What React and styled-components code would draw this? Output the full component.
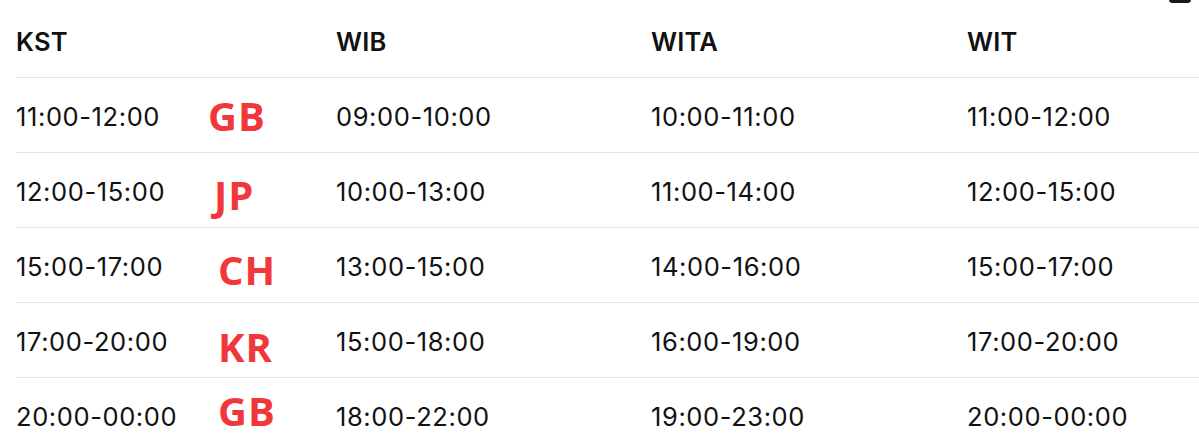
import React from 'react';
import styled, { createGlobalStyle } from 'styled-components';

const GlobalStyle = createGlobalStyle`
  html, body {
    margin: 0;
    padding: 0;
    background: #ffffff;
  }
  body {
    font-family: Inter, "Liberation Sans", sans-serif;
    color: #111111;
    overflow: hidden;
  }
`

const rows = [
  { kst: '11:00-12:00', tag: 'GB', shift: 0, lift: 0, wib: '09:00-10:00', wita: '10:00-11:00', wit: '11:00-12:00' },
  { kst: '12:00-15:00', tag: 'JP', shift: 6, lift: -4, wib: '10:00-13:00', wita: '11:00-14:00', wit: '12:00-15:00' },
  { kst: '15:00-17:00', tag: 'CH', shift: 10, lift: -4, wib: '13:00-15:00', wita: '14:00-16:00', wit: '15:00-17:00' },
  { kst: '17:00-20:00', tag: 'KR', shift: 10, lift: -6, wib: '15:00-18:00', wita: '16:00-19:00', wit: '17:00-20:00' },
  { kst: '20:00-00:00', tag: 'GB', shift: 10, lift: 5, wib: '18:00-22:00', wita: '19:00-23:00', wit: '20:00-00:00' },
]

function App() {
  return (
    <>
      <GlobalStyle />
      <Page>
        <Notch />
        <Table>
          <Row>
            <Cell head>KST</Cell>
            <Cell head>WIB</Cell>
            <Cell head>WITA</Cell>
            <Cell head>WIT</Cell>
          </Row>
          {rows.map((r, i) => (
            <Row key={i}>
              <Cell>
                <Time>{r.kst}</Time>
                <Tag shift={r.shift} lift={r.lift}>{r.tag}</Tag>
              </Cell>
              <Cell>{r.wib}</Cell>
              <Cell>{r.wita}</Cell>
              <Cell>{r.wit}</Cell>
            </Row>
          ))}
        </Table>
      </Page>
    </>
  )
}

export default App;

const Page = styled.div`
position: relative;
width: 1199px;
height: 433px;
overflow: hidden;
padding: 3px 0 0 16px;
box-sizing: border-box;
`
const Notch = styled.span`
position: absolute;
top: -4px;
right: 8px;
width: 22px;
height: 7px;
border-radius: 4px;
background: #1a1a1a;
`
const Table = styled.div`
display: flex;
flex-direction: column;
`
const Row = styled.div`
display: grid;
grid-template-columns: 320px 315px 316px 1fr;
align-items: center;
height: 75px;
border-bottom: 1.5px solid #e4e4e6;
box-sizing: border-box;
`
const Cell = styled.div`
display: flex;
align-items: center;
font-size: 25.5px;
font-weight: ${props => props.head ? 600 : 400};
letter-spacing: ${props => props.head ? '0.2px' : '0.6px'};
padding-top: 2px;
white-space: nowrap;
`
const Time = styled.span`
width: 192px;
`
const Tag = styled.span`
font-family: "Open Sans", "Liberation Sans", sans-serif;
font-weight: 700;
font-size: 40px;
line-height: 0.9;
color: #f1373a;
letter-spacing: 1px;
margin-left: ${props => props.shift}px;
transform: translateY(${props => -props.lift}px);
`
